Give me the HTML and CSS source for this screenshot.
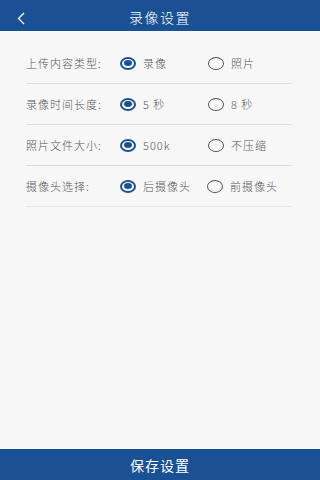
FILE: index.html
```html
<!DOCTYPE html>
<html lang="zh-CN">
<head>
  <meta charset="UTF-8">
  <meta name="viewport" content="width=device-width, initial-scale=1.0">
  <title>录像设置</title>
  <link rel="stylesheet" href="styles.css">
</head>
<body>
  <div class="page">
    <div class="top-bar">
      <div class="status">
        <span class="st-left"><i></i><i class="w"></i></span>
        <span class="st-right"><i></i><i class="w"></i><i class="wide"></i><i></i></span>
      </div>
      <div class="title-bar">
        <span class="back">
          <svg width="10" height="13" viewBox="0 0 10 13"><path d="M8 1 L2.5 6.5 L8 12" fill="none" stroke="#fff" stroke-width="1.3"/></svg>
        </span>
        <span class="title">录像设置</span>
      </div>
    </div>

    <div class="settings">
      <div class="row">
        <span class="label">上传内容类型:</span>
        <span class="opt"><span class="radio on"></span>录像</span>
        <span class="opt"><span class="radio"></span>照片</span>
      </div>
      <div class="row">
        <span class="label">录像时间长度:</span>
        <span class="opt"><span class="radio on"></span>5 秒</span>
        <span class="opt"><span class="radio"></span>8 秒</span>
      </div>
      <div class="row">
        <span class="label">照片文件大小:</span>
        <span class="opt"><span class="radio on"></span>500k</span>
        <span class="opt"><span class="radio"></span>不压缩</span>
      </div>
      <div class="row">
        <span class="label">摄像头选择:</span>
        <span class="opt"><span class="radio on"></span>后摄像头</span>
        <span class="opt narrow"><span class="radio"></span>前摄像头</span>
      </div>
    </div>

    <div class="save-btn">保存设置</div>
  </div>
</body>
</html>
```

FILE: styles.css
```css
html, body {
  margin: 0;
  padding: 0;
}
body {
  font-family: "Noto Sans CJK SC", "Liberation Sans", sans-serif;
  background: #f7f7f7;
}
.page {
  width: 320px; height: 480px;
  display: flex;
  flex-direction: column;
  overflow: hidden;
}
.top-bar {
  background: #1a5195;
  height: 31px;
  flex: none;
}
.status {
  height: 3px;
  display: flex;
  justify-content: space-between;
  padding: 0 50px 0 17px;
  overflow: hidden;
}
.status i {
  display: inline-block;
  width: 5px; height: 2px;
  margin-right: 3px;
  background: rgba(255,255,255,0.6);
}
.status i.w {
  width: 10px;
}
.status i.wide {
  width: 13px;
  background: #fff;
}
.title-bar {
  height: 26px;
  display: flex;
  align-items: center;
  position: relative;
}
.back {
  display: flex;
  margin-left: 16px;
  margin-top: 4px;
}
.title {
  position: absolute;
  left: 0; right: 0;
  top: 4px;
  text-align: center;
  color: #fff;
  font-size: 14px;
  font-weight: 300;
  letter-spacing: 1.5px;
}
.settings {
  flex: 1;
  padding: 12px 28px 0 26px;
}
.row {
  display: flex;
  align-items: center;
  height: 40px;
  border-bottom: 1.5px solid #dcdcdc;
  font-size: 11px;
  font-weight: 300;
  color: #555;
  letter-spacing: 1px;
}
.row:last-child {
  border-bottom: 1px solid #e6e6e6;
}
.label {
  flex: none;
  width: 94px;
}
.opt {
  flex: none;
  display: flex;
  align-items: center;
  width: 88px;
}
.opt.narrow {
  width: auto;
  margin-left: -1px;
}
.radio {
  flex: none;
  box-sizing: border-box;
  width: 16px; height: 13px;
  border: 1.5px solid #555;
  border-radius: 50%;
  margin-right: 7px;
  position: relative;
}
.radio.on {
  border: 2px solid #1a5195;
}
.radio.on::after {
  content: '';
  position: absolute;
  left: 2px; top: 1.5px;
  width: 8px; height: 6px;
  border-radius: 50%;
  background: #1a5195;
}
.save-btn {
  flex: none;
  height: 31px;
  line-height: 33px;
  background: #1a5195;
  color: #fff;
  text-align: center;
  font-size: 14px;
  letter-spacing: 1px;
}
```
